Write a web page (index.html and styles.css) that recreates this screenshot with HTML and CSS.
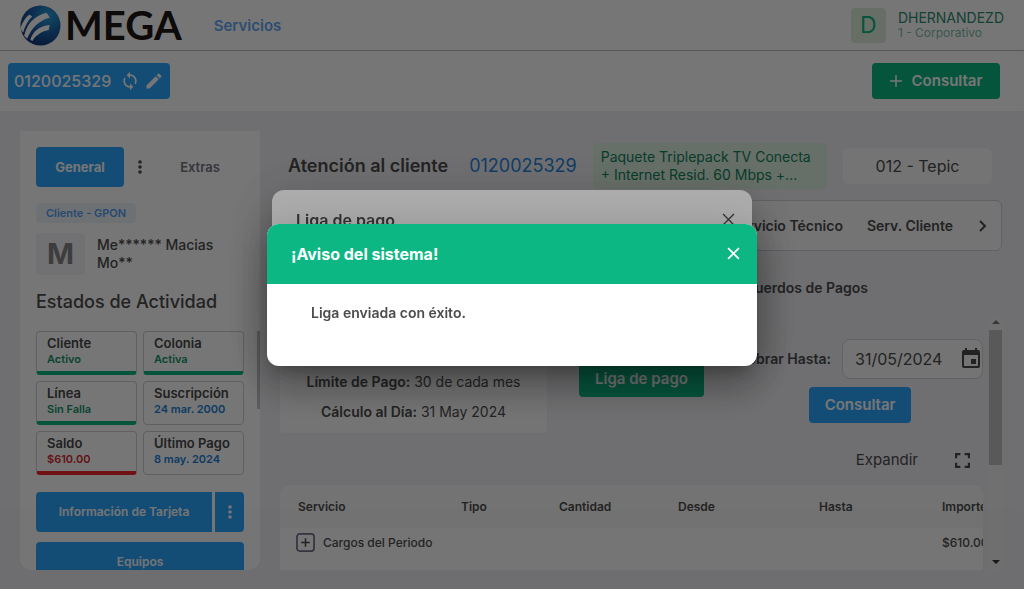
FILE: index.html
```html
<!DOCTYPE html>
<html lang="es">
<head>
<meta charset="utf-8">
<meta name="viewport" content="width=device-width, initial-scale=1">
<title>Mega - Atención al cliente</title>
<link rel="stylesheet" href="styles.css">
</head>
<body>
<div class="app">
  <header class="topbar">
    <div class="brand">
      <svg class="brand-mark" viewBox="0 0 40 40" aria-hidden="true">
        <defs>
          <radialGradient id="globe" cx="0.7" cy="0.25" r="0.85">
            <stop offset="0" stop-color="#2b9fd6"/>
            <stop offset="0.5" stop-color="#1a62a8"/>
            <stop offset="1" stop-color="#123070"/>
          </radialGradient>
          <clipPath id="disc"><circle cx="20" cy="20" r="19.5"/></clipPath>
        </defs>
        <circle cx="20" cy="20" r="19.5" fill="url(#globe)"/>
        <g fill="#fff" clip-path="url(#disc)">
          <path d="M1 21Q4 13 9 9.500l3 1.500Q6 17 3 27L1 24z"/>
          <path d="M4 30Q8 12 26 7.500l3 5Q14 16 7 33z"/>
          <path d="M10 34Q14 21 29 19.500l-1 5Q18 26 12 35z"/>
        </g>
      </svg>
      <span class="brand-name">MEGA</span>
    </div>
    <a class="nav-link" href="#servicios">Servicios</a>
    <div class="user">
      <span class="user-avatar">D</span>
      <div>
        <div class="user-name">DHERNANDEZD</div>
        <div class="user-branch">1 - Corporativo</div>
      </div>
    </div>
  </header>

  <div class="toolbar">
    <button class="btn account" type="button">
      <span>0120025329</span>
      <svg class="icon-20" viewBox="0 0 24 24" fill="currentColor" aria-hidden="true"><path d="M12 4V1L8 5l4 4V6c3.31 0 6 2.69 6 6 0 1.01-.25 1.97-.7 2.8l1.46 1.46A7.93 7.93 0 0 0 20 12c0-4.42-3.58-8-8-8zm0 14c-3.31 0-6-2.69-6-6 0-1.01.25-1.97.7-2.8L5.24 7.74A7.93 7.93 0 0 0 4 12c0 4.42 3.58 8 8 8v3l4-4-4-4v3z"/></svg>
      <svg class="icon-20" viewBox="0 0 24 24" fill="currentColor" aria-hidden="true"><path d="M3 17.25V21h3.75L17.81 9.94l-3.75-3.75L3 17.25zM20.71 7.04a1 1 0 0 0 0-1.41l-2.34-2.34a1 1 0 0 0-1.41 0l-1.83 1.83 3.75 3.75 1.83-1.83z"/></svg>
    </button>
    <button class="btn green query" type="button">
      <svg class="icon-12" viewBox="0 0 12 12" stroke="currentColor" stroke-width="1.5" aria-hidden="true"><path d="M6 0v12M0 6h12"/></svg>
      Consultar
    </button>
  </div>

  <main class="main">
    <aside class="side">
      <div class="side-tabs">
        <button class="btn side-tab" type="button">General</button>
        <button class="more" type="button" aria-label="Más opciones">
          <svg class="dots" viewBox="0 0 4 14" fill="currentColor" aria-hidden="true"><circle cx="2" cy="2" r="1.8"/><circle cx="2" cy="7" r="1.8"/><circle cx="2" cy="12" r="1.8"/></svg>
        </button>
        <button class="extras" type="button">Extras</button>
      </div>
      <span class="tag">Cliente - GPON</span>
      <div class="client">
        <span class="client-avatar">M</span>
        <span class="client-name">Me****** Macias Mo**</span>
      </div>
      <h2 class="side-title">Estados de Actividad</h2>
      <div class="states">
        <div class="state ok"><b>Cliente</b><span>Activo</span></div>
        <div class="state ok"><b>Colonia</b><span>Activa</span></div>
        <div class="state ok"><b>Línea</b><span>Sin Falla</span></div>
        <div class="state info"><b>Suscripción</b><span>24 mar. 2000</span></div>
        <div class="state bad"><b>Saldo</b><span>$610.00</span></div>
        <div class="state info"><b>Último Pago</b><span>8 may. 2024</span></div>
      </div>
      <div class="split">
        <button class="btn split-main" type="button">Información de Tarjeta</button>
        <button class="btn split-more" type="button" aria-label="Más información">
          <svg class="dots" viewBox="0 0 4 14" fill="currentColor" aria-hidden="true"><circle cx="2" cy="2" r="1.8"/><circle cx="2" cy="7" r="1.8"/><circle cx="2" cy="12" r="1.8"/></svg>
        </button>
      </div>
      <button class="btn wide" type="button">Equipos</button>
      <span class="side-thumb"></span>
    </aside>

    <section class="content">
      <div class="heading">
        <h1 class="title">Atención al cliente</h1>
        <span class="number">0120025329</span>
        <span class="package">Paquete Triplepack TV Conecta<br>+ Internet Resid. 60 Mbps +...</span>
        <span class="place">012 - Tepic</span>
      </div>
      <nav class="tabs">
        <a href="#tecnico">Servicio Técnico</a>
        <a href="#cliente">Serv. Cliente</a>
        <button class="next" type="button" aria-label="Siguiente">
          <svg viewBox="0 0 8 12" fill="none" stroke="currentColor" stroke-width="2" aria-hidden="true"><path d="M1 1l5 5-5 5"/></svg>
        </button>
      </nav>
      <div class="subtabs"><a href="#acuerdos">Acuerdos de Pagos</a></div>

      <div class="scroller">
        <div class="panel">
          <div class="billing">
            <div class="limits">
              <p><b>Límite de Pago:</b> 30 de cada mes</p>
              <p><b>Cálculo al Día:</b> 31 May 2024</p>
            </div>
            <button class="btn green pay" type="button">Liga de pago</button>
            <form class="until">
              <div class="until-row">
                <label for="until">Cobrar Hasta:</label>
                <div class="date">
                  <input id="until" type="text" value="31/05/2024">
                  <svg viewBox="0 0 24 24" fill="currentColor" aria-hidden="true"><path d="M17 12h-5v5h5v-5zM16 1v2H8V1H6v2H5a2 2 0 0 0-2 2v14a2 2 0 0 0 2 2h14a2 2 0 0 0 2-2V5a2 2 0 0 0-2-2h-1V1h-2zm3 18H5V8h14v11z"/></svg>
                </div>
              </div>
              <button class="btn submit" type="button">Consultar</button>
            </form>
          </div>
          <div class="expand">
            <span>Expandir</span>
            <svg viewBox="0 0 14 14" fill="none" stroke="currentColor" stroke-width="2" aria-hidden="true"><path d="M1 5V1h4M9 1h4v4M13 9v4H9M5 13H1V9"/></svg>
          </div>
          <div class="table-box">
            <table class="charges">
              <colgroup><col class="c-service"><col class="c-type"><col class="c-qty"><col class="c-from"><col class="c-to"><col class="c-amount"></colgroup>
              <thead>
                <tr><th>Servicio</th><th>Tipo</th><th>Cantidad</th><th>Desde</th><th>Hasta</th><th>Importe</th></tr>
              </thead>
              <tbody>
                <tr>
                  <td colspan="5">
                    <div class="group">
                      <svg viewBox="0 0 20 20" fill="none" aria-hidden="true"><rect x="1" y="1" width="18" height="18" rx="3" stroke="#72728c" stroke-width="1.800"/><path d="M10 5.500v9M5.500 10h9" stroke="#484850" stroke-width="1.600"/></svg>
                      Cargos del Periodo
                    </div>
                  </td>
                  <td>$610.00</td>
                </tr>
              </tbody>
            </table>
          </div>
        </div>
        <div class="bar" aria-hidden="true">
          <svg viewBox="0 0 8 4" fill="#777"><path d="M0 4l4-4 4 4z"/></svg>
          <span class="bar-thumb"></span>
          <svg viewBox="0 0 8 4" fill="#333"><path d="M0 0l4 4 4-4z"/></svg>
        </div>
      </div>
    </section>
  </main>
</div>

<div class="overlay under">
  <div class="modal pay-modal" role="dialog" aria-labelledby="pay-title">
    <div class="modal-head">
      <h2 id="pay-title">Liga de pago</h2>
      <button class="close" type="button" aria-label="Cerrar"><svg viewBox="0 0 12 12" stroke="currentColor" stroke-width="1.200" aria-hidden="true"><path d="M1 1l10 10M11 1L1 11"/></svg></button>
    </div>
  </div>
</div>

<div class="overlay">
  <div class="modal notice" role="alertdialog" aria-labelledby="notice-title">
    <div class="modal-head">
      <h2 id="notice-title">¡Aviso del sistema!</h2>
      <button class="close" type="button" aria-label="Cerrar"><svg viewBox="0 0 12 12" stroke="currentColor" stroke-width="1.600" aria-hidden="true"><path d="M1 1l10 10M11 1L1 11"/></svg></button>
    </div>
    <p class="notice-text">Liga enviada con éxito.</p>
  </div>
</div>
</body>
</html>
```
FILE: styles.css
```css
* { box-sizing: border-box; }

body {
  margin: 0;
  font-family: Inter, "Liberation Sans", sans-serif;
  font-size: 14px;
  line-height: 18px;
  color: #4c4c4c;
  background: #f0f0f4;
}

h1, h2, p { margin: 0; }
a { color: inherit; text-decoration: none; }

button {
  font: inherit;
  color: inherit;
  border: 0;
  padding: 0;
  background: none;
}

svg { display: block; flex: none; }

.app { display: flex; flex-direction: column; height: 100vh; overflow: hidden; }

.btn {
  display: flex;
  align-items: center;
  justify-content: center;
  border-radius: 4px;
  background: #2ba6ff;
  color: #fff;
  font-weight: 600;
}
.btn.green { background: #0cb783; }

/* Header */
.topbar {
  flex: none;
  display: flex;
  align-items: center;
  height: 51px;
  padding: 0 20px;
  background: #fff;
  border-bottom: 1px solid #bebebe;
}
.brand { display: flex; align-items: center; gap: 4px; }
.brand-mark { width: 41px; height: 41px; }
.brand-name {
  font-family: Lato, "Liberation Sans", sans-serif;
  font-size: 40px;
  line-height: 46px;
  font-weight: 700;
  color: #1c1615;
}
.nav-link { margin-left: 32px; padding-top: 2px; font-size: 15px; font-weight: 600; color: #62a8f5; }
.user { display: flex; align-items: center; gap: 12px; margin-left: auto; }
.user-avatar {
  display: grid;
  place-items: center;
  width: 35px;
  height: 35px;
  border-radius: 4px;
  background: #dfeedd;
  font-size: 23px;
  color: #0cb783;
}
.user-name { line-height: 16px; color: #2e8c72; }
.user-branch { font-size: 12px; line-height: 14px; color: #7fbda9; }

.toolbar {
  flex: none;
  display: flex;
  justify-content: space-between;
  padding: 12px 24px 12px 8px;
  background: #fff;
}
.account { height: 36px; padding: 0 6px; gap: 4px; font-size: 16px; font-weight: 500; }
.account span { margin-right: 5px; }
.icon-20 { width: 20px; height: 20px; }
.icon-12 { width: 12px; height: 12px; }
.query { height: 36px; width: 128px; gap: 10px; font-size: 15px; }

/* Body */
.main { flex: 1; min-height: 0; display: flex; gap: 20px; padding: 20px 20px 19px; }

.side {
  position: relative;
  flex: none;
  width: 240px;
  padding: 16px 16px 0;
  border-radius: 0 0 12px 12px;
  background: #fff;
  overflow: hidden;
}
.side-thumb {
  position: absolute;
  right: 0;
  top: 200px;
  width: 3px;
  height: 78px;
  background: #c4c4c4;
}
.side-tabs { display: flex; align-items: center; margin-bottom: 16px; }
.side-tab { width: 88px; height: 40px; font-size: 13px; font-weight: 700; }
.more { width: 32px; display: grid; place-items: center; }
.dots { width: 4px; height: 14px; }
.extras { flex: 1; font-size: 13px; font-weight: 600; color: #76767f; }
.tag {
  display: inline-block;
  padding: 1px 10px;
  border-radius: 4px;
  background: #eef4fa;
  color: #539ff0;
  font-size: 11px;
  font-weight: 600;
}
.client { display: flex; align-items: center; gap: 12px; margin: 10px 0 16px; }
.client-avatar {
  flex: none;
  display: grid;
  place-items: center;
  width: 49px;
  height: 42px;
  border-radius: 4px;
  background: #f4f4f8;
  font-size: 29px;
  font-weight: 700;
  color: #858585;
}
.client-name { width: 128px; font-weight: 500; }
.side-title { font-size: 18px; line-height: 22px; font-weight: 500; }
.states {
  display: grid;
  grid-template-columns: 1fr 1fr;
  gap: 6px;
  margin: 18px 0 17px;
}
.state {
  display: flex;
  flex-direction: column;
  height: 44px;
  padding: 4px 10px 0;
  border: 1px solid #d0d0d0;
  border-radius: 4px;
  font-size: 11px;
  line-height: 16px;
  font-weight: 600;
}
.state b { font-size: 13px; line-height: 15px; font-weight: 600; color: #484848; }
.state.ok { color: #12946b; border-bottom: 4px solid #0cb783; }
.state.info { color: #1b82d8; }
.state.bad { color: #d62a2e; border-bottom: 4px solid #f0252d; }
.split { display: flex; gap: 3px; margin-bottom: 10px; }
.split-main { flex: 1; height: 40px; font-size: 12px; border-radius: 4px 0 0 4px; }
.split-more { width: 29px; height: 40px; border-radius: 0 4px 4px 0; }
.wide { width: 100%; height: 40px; font-size: 12px; }

.content { flex: 1; min-width: 0; display: flex; flex-direction: column; }
.heading { display: flex; align-items: center; margin: 12px 12px 11px 8px; }
.title { font-size: 18px; line-height: 22px; font-weight: 600; }
.number { margin-left: 21px; font-size: 18px; line-height: 22px; color: #2585dc; }
.package {
  flex: 1;
  margin: 0 16px;
  padding: 5px 8px;
  border-radius: 4px;
  background: #dcefe0;
  color: #128260;
  white-space: nowrap;
}
.place {
  width: 149px;
  padding: 9px 0;
  border-radius: 6px;
  background: #fbfbfb;
  font-size: 16px;
  text-align: center;
}
.tabs {
  display: flex;
  align-items: center;
  justify-content: flex-end;
  gap: 24px;
  height: 51px;
  margin-right: 2px;
  padding-right: 14px;
  border: 1px solid #d0d0da;
  border-radius: 6px;
  background: #fbfbfb;
  font-weight: 600;
}
.next svg { width: 8px; height: 12px; }
.next { margin-left: 2px; }
.subtabs { padding: 28px 136px 19px 0; text-align: right; font-weight: 600; }

.scroller { flex: 1; min-height: 0; display: flex; gap: 6px; margin-right: 2px; }
.panel { flex: 1; min-width: 0; overflow: hidden; }
.bar {
  display: flex;
  flex-direction: column;
  align-items: center;
  width: 13px;
  padding: 4px 0 6px;
  background: #f1f1f1;
}
.bar svg { width: 8px; height: 4px; }
.bar svg:last-child { margin-top: auto; }
.bar-thumb { width: 13px; height: 135px; margin-top: 6px; background: #c1c1c1; }

.billing { display: flex; align-items: flex-start; height: 117px; }
.limits {
  width: 267px;
  height: 117px;
  padding-top: 57px;
  border-radius: 0 0 4px 4px;
  background: #fbfbfb;
  text-align: center;
}
.limits p { margin-bottom: 12px; }
.limits b { font-weight: 600; }
.pay { width: 125px; height: 36px; margin: 45px auto 0 32px; font-size: 15px; }
.until { padding-top: 23px; display: flex; flex-direction: column; align-items: center; gap: 8px; }
.until-row { display: flex; align-items: center; gap: 11px; }
.until label { font-weight: 600; }
.date {
  display: flex;
  align-items: center;
  width: 141px;
  height: 40px;
  border: 1px solid #d4d4d8;
  border-radius: 8px;
  background: #fbfbfb;
}
.date input {
  width: 116px;
  padding: 0 0 0 12px;
  border: 0;
  background: none;
  font: inherit;
  font-size: 16px;
  color: inherit;
}
.date svg { width: 24px; height: 24px; color: #4a4a4a; }
.submit { width: 102px; height: 36px; font-size: 15px; }
.expand {
  display: flex;
  align-items: center;
  justify-content: flex-end;
  gap: 37px;
  margin: 18px 13px 16px 0;
  font-size: 15px;
}
.expand svg { width: 15px; height: 15px; color: #4a4a4a; }
.table-box { border-radius: 10px 10px 0 0; background: #fff; overflow: hidden; }
.charges {
  table-layout: fixed;
  width: 720px;
  border-collapse: collapse;
  font-size: 12px;
  text-align: left;
}
.charges th { height: 43px; padding: 0; background: #f9f9f9; font-weight: 600; }
.charges td { height: 43px; padding: 0 0 14px; font-weight: 500; }
.charges th:first-child { padding-left: 18px; }
.c-service { width: 181px; }
.c-type { width: 98px; }
.c-qty { width: 119px; }
.c-from { width: 141px; }
.c-to { width: 123px; }
.c-amount { width: 58px; }
.group { display: flex; align-items: center; gap: 8px; padding-left: 16px; }
.group svg { width: 19px; height: 19px; }

/* Dialogs */
.overlay {
  position: fixed;
  inset: 0;
  display: flex;
  align-items: center;
  justify-content: center;
  background: rgba(0, 0, 0, 0.32);
}
.overlay.under { padding-bottom: 50px; }
.modal {
  max-width: 90vw;
  border-radius: 12px;
  background: #fff;
  overflow: hidden;
  box-shadow: 0 11px 15px -7px rgba(0, 0, 0, 0.2), 0 24px 38px 3px rgba(0, 0, 0, 0.14), 0 9px 46px 8px rgba(0, 0, 0, 0.12);
}
.pay-modal { width: 480px; min-height: 160px; }
.notice { width: 490px; }
.modal-head {
  display: flex;
  align-items: center;
  justify-content: space-between;
  height: 60px;
  padding: 0 17px 0 24px;
}
.modal-head h2 { font-size: 16px; line-height: 20px; font-weight: 600; }
.close svg { width: 13px; height: 13px; }
.notice .modal-head { background: #0cb783; color: #fff; }
.notice .modal-head h2 { font-weight: 700; }
.notice-text { padding: 20px 44px 44px; font-weight: 600; }
```
